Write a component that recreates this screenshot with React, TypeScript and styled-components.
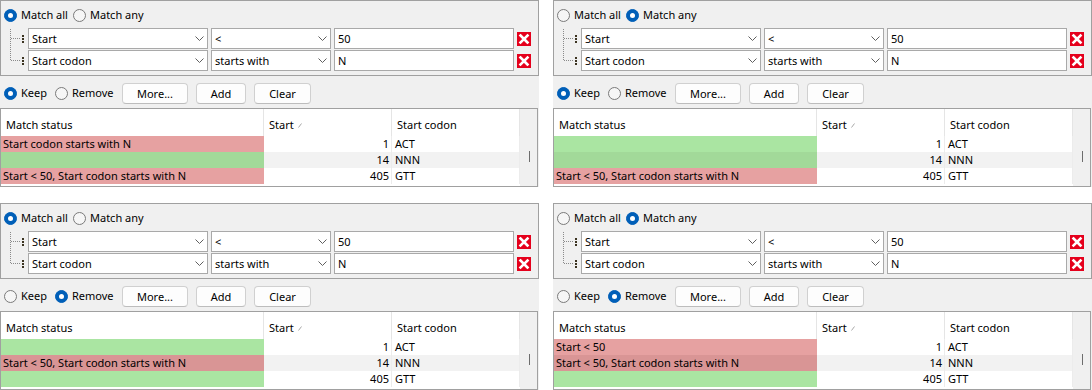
import React from 'react';
import styled, { createGlobalStyle } from 'styled-components';

const GlobalStyle = createGlobalStyle`
  html, body { margin: 0; padding: 0; background: #ffffff; }
  body {
    font-family: "Noto Sans", "Open Sans", sans-serif;
    font-size: 11px;
    color: #000;
  }
  * { box-sizing: border-box; }
`;

const Page = styled.div`
  display: grid;
  grid-template-columns: 539px 539px;
  column-gap: 14px;
  row-gap: 16px;
  width: 1092px;
`;

const Panel = styled.div`
  display: flex;
  flex-direction: column;
  width: 539px;
  height: 187px;
  background: #f0f0f0;
`;

const GroupBox = styled.div`
  height: 76px;
  border: 1px solid #a0a0a0;
  padding-top: 6px;
  display: flex;
  flex-direction: column;
`;

const RadioRow = styled.div`
  display: flex;
  align-items: center;
  height: 16px;
  padding-left: 3px;
`;

const RadioOption = styled.label<{ $w: number }>`
  display: inline-flex;
  align-items: center;
  gap: 4px;
  width: ${(p) => p.$w}px;
  flex: none;
  white-space: nowrap;
  line-height: 16px;
`;

const RadioCircle = styled.span<{ $checked: boolean }>`
  width: 13px;
  height: 13px;
  flex: none;
  border-radius: 50%;
  display: inline-flex;
  align-items: center;
  justify-content: center;
  background: ${(p) => (p.$checked ? '#005fb8' : '#f6f6f6')};
  border: 1px solid ${(p) => (p.$checked ? '#005fb8' : '#7a7a7a')};
  &::after {
    content: '';
    display: ${(p) => (p.$checked ? 'block' : 'none')};
    width: 5px;
    height: 5px;
    border-radius: 50%;
    background: #fff;
  }
`;

const FilterList = styled.div`
  margin-top: 5px;
  display: flex;
  flex-direction: column;
  gap: 1px;
`;

const FilterRow = styled.div`
  display: flex;
  align-items: center;
  height: 21px;
`;

const Connector = styled.svg`
  width: 27px;
  height: 21px;
  flex: none;
  overflow: visible;
`;

const Fields = styled.div`
  display: flex;
  align-items: center;
  gap: 3px;
`;

const Combo = styled.div<{ $w: number }>`
  width: ${(p) => p.$w}px;
  height: 21px;
  background: #fff;
  border: 1px solid #a9a9a9;
  display: flex;
  align-items: center;
  justify-content: space-between;
  padding: 0 3px 0 3px;
  line-height: 16px;
  white-space: nowrap;
`;

const TextBox = styled.div<{ $w: number }>`
  width: ${(p) => p.$w}px;
  height: 21px;
  background: #fff;
  border: 1px solid #a9a9a9;
  display: flex;
  align-items: center;
  padding-left: 3px;
  line-height: 16px;
`;

const RemoveBox = styled.span`
  width: 14px;
  height: 14px;
  flex: none;
  background: #e5001c;
  display: inline-flex;
  align-items: center;
  justify-content: center;
`;

const ActionRow = styled.div`
  height: 32px;
  display: flex;
  align-items: center;
  padding: 2px 0 0 4px;
`;

const Buttons = styled.div`
  display: flex;
  gap: 8px;
`;

const Button = styled.button<{ $w: number }>`
  width: ${(p) => p.$w}px;
  height: 21px;
  padding: 0;
  font: inherit;
  color: #000;
  background: #fdfdfd;
  border: 1px solid #d0d0d0;
  border-bottom-color: #bdbdbd;
  border-radius: 4px;
`;

const Table = styled.div`
  width: 538px;
  height: 79px;
  border: 1px solid #a0a0a0;
  background: #fff;
  display: grid;
  grid-template-columns: 263px 128px 128px 17px;
  grid-template-rows: 27px 16px 16px 16px 1fr;
`;

const HeaderCell = styled.div`
  display: flex;
  align-items: center;
  padding: 4px 0 0 5px;
  background: #fff;
  border-right: 1px solid #e5e5e5;
  white-space: nowrap;
`;

const SortMark = styled.svg`
  width: 4px;
  height: 5px;
  margin-left: 4px;
  margin-top: 2px;
`;

const ScrollTrack = styled.div`
  grid-column: 4;
  grid-row: 1 / -1;
  background: #f0f0f0;
  padding: 42px 0 0 9px;
`;

const Thumb = styled.div`
  width: 1px;
  height: 11px;
  background: #6d6d6d;
`;

const StatusCell = styled.div<{ $ok: boolean; $alt: boolean }>`
  height: 16px;
  line-height: 16px;
  padding-left: 2px;
  white-space: nowrap;
  overflow: hidden;
  background: ${(p) =>
    p.$ok ? (p.$alt ? '#a2d999' : '#aae5a2') : p.$alt ? '#d99595' : '#e6a1a1'};
`;

const NumCell = styled.div<{ $alt: boolean }>`
  height: 16px;
  line-height: 16px;
  text-align: right;
  padding-right: 2px;
  border-right: 1px solid #ececec;
  background: ${(p) => (p.$alt ? '#f2f2f2' : '#fff')};
`;

const TextCell = styled.div<{ $alt: boolean }>`
  height: 16px;
  line-height: 16px;
  padding-left: 3px;
  border-right: 1px solid #ececec;
  background: ${(p) => (p.$alt ? '#f2f2f2' : '#fff')};
`;

const Chevron = () => (
  <svg width="9" height="5" viewBox="0 0 9 5">
    <path d="M0.5 0.5 L4.5 4.5 L8.5 0.5" fill="none" stroke="#5f5f5f" strokeWidth="1" />
  </svg>
);

const XIcon = () => (
  <svg width="14" height="14" viewBox="0 0 14 14">
    <path d="M3.5 3.5 L10.5 10.5 M10.5 3.5 L3.5 10.5" stroke="#fff" strokeWidth="2.6" strokeLinecap="square" />
  </svg>
);

const Tree = ({ last }: { last: boolean }) => (
  <Connector viewBox="0 0 27 21">
    <line
      x1="9.5"
      y1={last ? -1 : 1}
      x2="9.5"
      y2={last ? 10 : 22}
      stroke="#8a8a8a"
      strokeWidth="1"
      strokeDasharray="1 1"
      shapeRendering="crispEdges"
    />
    <line
      x1="10"
      y1="10.5"
      x2="19"
      y2="10.5"
      stroke="#8a8a8a"
      strokeWidth="1"
      strokeDasharray="1 1"
      shapeRendering="crispEdges"
    />
    <rect x="21" y="7" width="2" height="2" fill="#3b3320" />
    <rect x="21" y="10" width="2" height="2" fill="#3b3320" />
    <rect x="21" y="13" width="2" height="2" fill="#3b3320" />
  </Connector>
);

type Row = { status: string; ok: boolean; start: number; codon: string };

type PanelProps = {
  any: boolean;
  remove: boolean;
  rows: Row[];
};

const filters = [
  { field: 'Start', op: '<', value: '50' },
  { field: 'Start codon', op: 'starts with', value: 'N' },
];

const FilterPanel = ({ any, remove, rows }: PanelProps) => (
  <Panel>
    <GroupBox>
      <RadioRow>
        <RadioOption $w={69}>
          <RadioCircle $checked={!any} />
          Match all
        </RadioOption>
        <RadioOption $w={80}>
          <RadioCircle $checked={any} />
          Match any
        </RadioOption>
      </RadioRow>
      <FilterList>
        {filters.map((f, i) => (
          <FilterRow key={i}>
            <Tree last={i === filters.length - 1} />
            <Fields>
              <Combo $w={180}>
                <span>{f.field}</span>
                <Chevron />
              </Combo>
              <Combo $w={120}>
                <span>{f.op}</span>
                <Chevron />
              </Combo>
              <TextBox $w={180}>{f.value}</TextBox>
              <RemoveBox>
                <XIcon />
              </RemoveBox>
            </Fields>
          </FilterRow>
        ))}
      </FilterList>
    </GroupBox>
    <ActionRow>
      <RadioOption $w={51}>
        <RadioCircle $checked={!remove} />
        Keep
      </RadioOption>
      <RadioOption $w={67}>
        <RadioCircle $checked={remove} />
        Remove
      </RadioOption>
      <Buttons>
        <Button $w={66}>More...</Button>
        <Button $w={50}>Add</Button>
        <Button $w={57}>Clear</Button>
      </Buttons>
    </ActionRow>
    <Table>
      <HeaderCell>Match status</HeaderCell>
      <HeaderCell>
        Start
        <SortMark viewBox="0 0 4 5">
          <path d="M0.5 4.5 L3.5 0.5" stroke="#a8a8a8" strokeWidth="1" fill="none" />
        </SortMark>
      </HeaderCell>
      <HeaderCell>Start codon</HeaderCell>
      <ScrollTrack>
        <Thumb />
      </ScrollTrack>
      {rows.map((r, i) => (
        <React.Fragment key={i}>
          <StatusCell $ok={r.ok} $alt={i === 1}>
            {r.status}
          </StatusCell>
          <NumCell $alt={i === 1}>{r.start}</NumCell>
          <TextCell $alt={i === 1}>{r.codon}</TextCell>
        </React.Fragment>
      ))}
    </Table>
  </Panel>
);

const both = 'Start < 50, Start codon starts with N';

const panels: PanelProps[] = [
  {
    any: false,
    remove: false,
    rows: [
      { status: 'Start codon starts with N', ok: false, start: 1, codon: 'ACT' },
      { status: '', ok: true, start: 14, codon: 'NNN' },
      { status: both, ok: false, start: 405, codon: 'GTT' },
    ],
  },
  {
    any: true,
    remove: false,
    rows: [
      { status: '', ok: true, start: 1, codon: 'ACT' },
      { status: '', ok: true, start: 14, codon: 'NNN' },
      { status: both, ok: false, start: 405, codon: 'GTT' },
    ],
  },
  {
    any: false,
    remove: true,
    rows: [
      { status: '', ok: true, start: 1, codon: 'ACT' },
      { status: both, ok: false, start: 14, codon: 'NNN' },
      { status: '', ok: true, start: 405, codon: 'GTT' },
    ],
  },
  {
    any: true,
    remove: true,
    rows: [
      { status: 'Start < 50', ok: false, start: 1, codon: 'ACT' },
      { status: both, ok: false, start: 14, codon: 'NNN' },
      { status: '', ok: true, start: 405, codon: 'GTT' },
    ],
  },
];

export default function App() {
  return (
    <>
      <GlobalStyle />
      <Page>
        {panels.map((p, i) => (
          <FilterPanel key={i} {...p} />
        ))}
      </Page>
    </>
  );
}
